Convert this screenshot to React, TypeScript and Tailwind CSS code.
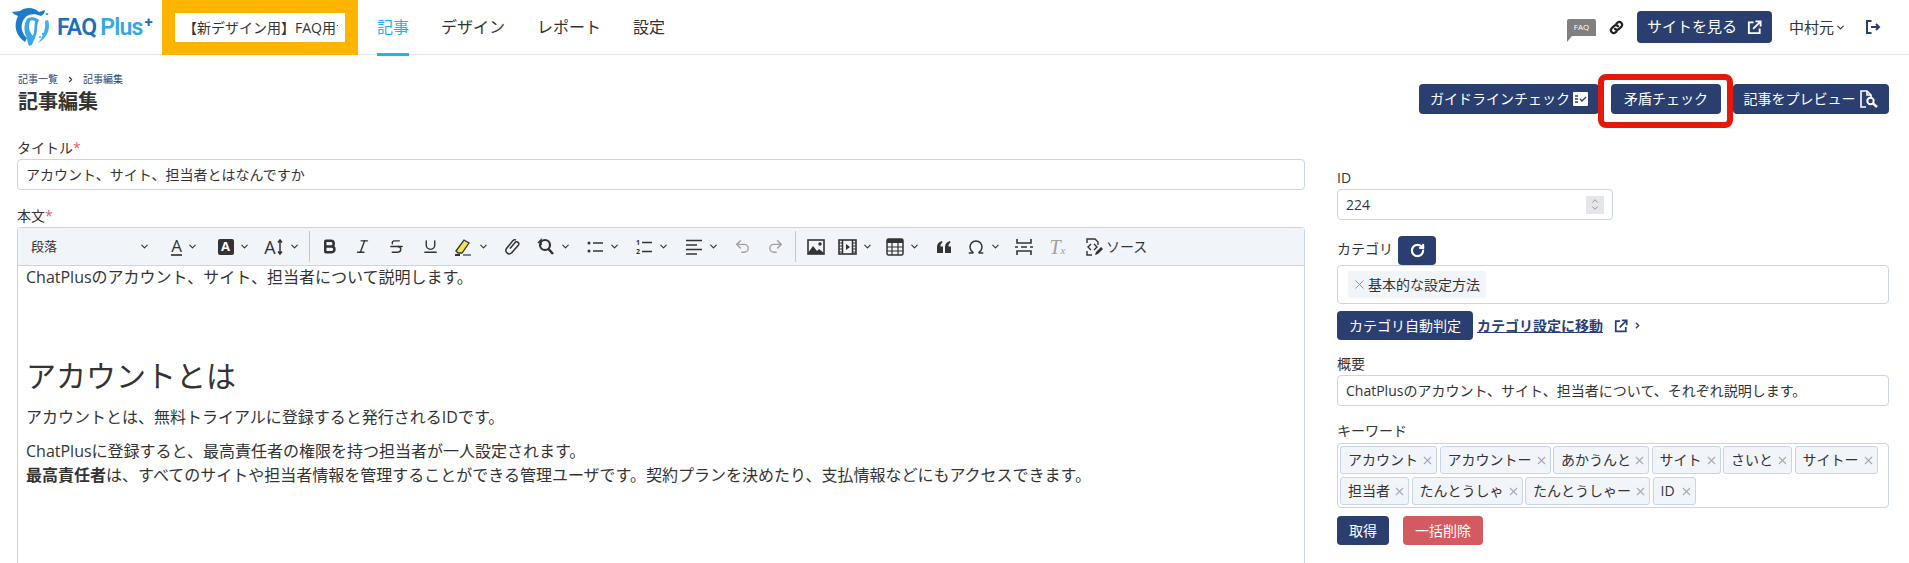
import type { ReactNode } from "react";
import { Bold, ChevronDown, ChevronRight, Italic, Strikethrough, Underline, Undo2, Redo2, RotateCw, X, ChevronUp, Omega } from "lucide-react";

const font = "font-['Open_Sans','Noto_Sans_CJK_JP',sans-serif]";

const keywordRows = [
  [
    ["アカウント", "w-[97px]"],
    ["アカウントー", "w-[111px]"],
    ["あかうんと", "w-[96px]"],
    ["サイト", "w-[69px]"],
    ["さいと", "w-[69px]"],
    ["サイトー", "w-[83px]"],
  ],
  [
    ["担当者", "w-[69px]"],
    ["たんとうしゃ", "w-[111px]"],
    ["たんとうしゃー", "w-[125px]"],
    ["ID", "w-[43px]"],
  ],
];

function OpenIcon({ size = 15 }: { size?: number }) {
  return (
    <svg width={size} height={size} viewBox="0 0 16 16" fill="none" stroke="currentColor" strokeWidth="2">
      <path d="M7 2.5H2v11.5h11.5V9" />
      <path d="M6.5 9.5 14 2M9 1.5h5.5V7" />
    </svg>
  );
}

function ChainIcon() {
  return (
    <svg width="15" height="15" viewBox="0 0 16 16" fill="none" stroke="#222" strokeWidth="2.4" strokeLinecap="round">
      <path d="M6.5 9.5a3 3 0 0 0 4.2 0l2.6-2.6a3 3 0 0 0-4.2-4.2L8 3.8" />
      <path d="M9.5 6.5a3 3 0 0 0-4.2 0L2.7 9.1a3 3 0 0 0 4.2 4.2L8 12.2" />
    </svg>
  );
}

function LogoutIcon() {
  return (
    <svg width="16" height="16" viewBox="0 0 16 16" fill="none" stroke="#2a3f70" strokeWidth="2">
      <path d="M6.5 2H2v12h4.5" />
      <path d="M6 8h8M11 5l3 3-3 3" />
    </svg>
  );
}

function ToolIcon({ children, w = 18 }: { children: ReactNode; w?: number }) {
  return (
    <svg width={w} height="18" viewBox={`0 0 ${w} 18`} fill="none" stroke="currentColor" strokeWidth="1.5">
      {children}
    </svg>
  );
}

function NavyButton({ children, className = "" }: { children: ReactNode; className?: string }) {
  return (
    <button className={`flex items-center justify-center rounded bg-[#2a3f70] text-sm text-white ${className}`}>
      {children}
    </button>
  );
}

function Label({ children, required }: { children: ReactNode; required?: boolean }) {
  return (
    <label className="block text-sm leading-5 text-[#333]">
      {children}
      {required && <span className="text-[#e06060]">*</span>}
    </label>
  );
}

function Tool({ w, chevron, children, muted }: { w: string; chevron?: boolean; children: ReactNode; muted?: boolean }) {
  return (
    <div className={`flex shrink-0 items-center justify-center gap-[5px] ${w} ${muted ? "text-[#a0a0a0]" : "text-[#333]"}`}>
      {children}
      {chevron && <ChevronDown size={11} strokeWidth={2.4} />}
    </div>
  );
}

function Sep() {
  return <div className="mx-[3px] h-[31px] w-px shrink-0 bg-[#c4c8cc]" />;
}

function Logo() {
  return (
    <div className="flex items-center">
      <svg width="40" height="40" viewBox="0 0 40 40" className="ml-[12px]">
        <path d="M36 13 C39 22 35 31 26 36 C31 30 34 22 33 14Z" fill="#39b3e8" />
        <path d="M0 5 L8 4 C13 0 22 0 27 5 L33 3 C33 6 31 8 29 9 C22 6 15 7 12 12 C8 18 9 26 15 31 L13 35 C4 29 1 19 6 9 C4 8 1 7 0 5Z" fill="#1c7cc9" />
        <path d="M16 11 C21 9 25 11 27 13 C24 18 26 23 24 28 C23 32 21 34 20 38 L17 39 C16 36 15 34 15 31 C11 24 12 15 16 11Z" fill="#3aa5e8" />
        <path d="M18 14 C16 20 17 25 21 29 C23 24 22 19 23 14 C21 13 19 13 18 14Z" fill="#ffffff" />
        <circle cx="35" cy="7" r="1.3" fill="#39b3e8" />
        <circle cx="31" cy="27" r="1.2" fill="#39b3e8" />
        <circle cx="28" cy="30" r="1" fill="#39b3e8" />
      </svg>
      <div className="ml-[5px] flex items-start font-['Roboto',sans-serif] text-[23px] leading-none font-semibold tracking-[-0.8px]">
        <span className="text-[#1c6fb8]">FAQ</span>
        <span className="ml-[4px] text-[#35a7e6]">Plus</span>
        <span className="ml-[2px] text-[15px] leading-[12px] font-bold text-[#1c6fb8]">+</span>
      </div>
    </div>
  );
}

function Header() {
  return (
    <header className="flex h-[55px] items-stretch border-b border-[#e3e9ee]">
      <div className="flex w-[162px] items-center">
        <Logo />
      </div>
      <div className="flex h-[55px] w-[196px] items-center justify-center bg-[#ffb400]">
        <div className="flex h-[29px] w-[170px] items-center bg-white pl-[8px] text-sm whitespace-nowrap text-[#333]">
          <span className="block w-[155px] overflow-hidden">【新デザイン用】FAQ用サ</span>
        </div>
      </div>
      <nav className="ml-[19px] flex text-[16px] text-[#333]">
        <a className="flex h-[56px] w-[32px] items-center justify-center border-b-[3px] border-[#18b9e6] text-[#18b9e6]">記事</a>
        <a className="ml-[32px] flex items-center">デザイン</a>
        <a className="ml-[32px] flex items-center">レポート</a>
        <a className="ml-[32px] flex items-center">設定</a>
      </nav>
      <div className="ml-auto flex items-center">
        <div className="relative flex h-[17px] w-[29px] items-center justify-center rounded-t-[2px] bg-[#808080] text-[8px] text-white">
          FAQ
          <div className="absolute top-[17px] left-0 h-0 w-0 border-t-[6px] border-r-[5px] border-t-[#808080] border-r-transparent" />
        </div>
        <span className="ml-[13px]"><ChainIcon /></span>
        <NavyButton className="ml-[13px] h-[32px] w-[135px] gap-[10px] text-[15px]">
          サイトを見る
          <OpenIcon />
        </NavyButton>
        <span className="ml-[17px] text-[15px] text-[#333]">中村元</span>
        <ChevronDown size={11} strokeWidth={2.5} className="ml-[1px] text-[#333]" />
        <span className="mr-[28px] ml-[19px]"><LogoutIcon /></span>
      </div>
    </header>
  );
}

function TitleRow() {
  return (
    <div className="relative flex h-[83px] justify-between pr-[20px] pl-[18px]">
      <div>
        <div className="mt-[17px] flex items-center text-[10px] leading-[14px] text-[#2a3f70]">
          記事一覧
          <ChevronRight size={9} strokeWidth={3} className="mx-[8px]" />
          記事編集
        </div>
        <h1 className="mt-[2px] text-xl leading-7 font-bold text-[#333]">記事編集</h1>
      </div>
      <div className="mt-[29px] flex h-[30px] gap-[12px]">
        <NavyButton className="w-[180px] gap-[3px]">
          ガイドラインチェック
          <svg width="15" height="14" viewBox="0 0 15 14">
            <rect width="15" height="14" rx="1" fill="#fff" />
            <path d="M2 4h3M2 7h3M2 10h3" stroke="#2a3f70" strokeWidth="1.4" />
            <path d="M7 7l2 2 4-4" stroke="#2a3f70" strokeWidth="1.4" fill="none" />
          </svg>
        </NavyButton>
        <NavyButton className="relative w-[110px]">
          矛盾チェック
          <span className="absolute top-[-10px] left-[-13px] h-[54px] w-[135px] rounded-[8px] border-[6px] border-[#e8170c]" />
        </NavyButton>
        <NavyButton className="w-[156px] gap-[3px]">
          記事をプレビュー
          <svg width="20" height="18" viewBox="0 0 20 18" fill="none" stroke="#fff" strokeWidth="1.6">
            <path d="M7 17H2V1h6l4 4v2" />
            <path d="M8 1v4h4" />
            <circle cx="11.5" cy="11" r="3.2" strokeWidth="2" />
            <path d="M14 13.5 18 17" strokeWidth="2.4" />
          </svg>
        </NavyButton>
      </div>
    </div>
  );
}

function Toolbar() {
  return (
    <div className="flex h-[38px] items-center border-b border-[#c8d4e8] bg-[#f1f4f9]">
      <div className="flex w-[142px] shrink-0 items-center justify-between pr-[10px] pl-[13px] text-[13px] text-[#333]">
        段落
        <ChevronDown size={11} strokeWidth={2.4} />
      </div>
      <Tool w="w-[49px]" chevron>
        <span className="border-b-2 border-[#555] text-[17px] leading-[17px]">A</span>
      </Tool>
      <Tool w="w-[49px]" chevron>
        <span className="flex h-[16px] w-[16px] items-center justify-center rounded-[2px] bg-[#333] text-[13px] font-bold text-white">A</span>
      </Tool>
      <Tool w="w-[48px]" chevron>
        <span className="flex items-center text-[18px] leading-none">
          A
          <ToolIcon w={8}><path d="M4 2v14M2 4.5 4 2l2 2.5M2 13.5 4 16l2-2.5" /></ToolIcon>
        </span>
      </Tool>
      <Sep />
      <Tool w="w-[33px]"><Bold size={17} strokeWidth={3.5} /></Tool>
      <Tool w="w-[33px]"><Italic size={17} /></Tool>
      <Tool w="w-[34px]"><Strikethrough size={17} /></Tool>
      <Tool w="w-[34px]"><Underline size={17} /></Tool>
      <Tool w="w-[49px]" chevron>
        <ToolIcon w={19}>
          <path d="M2 13 10 2l5 3-7 10H4z" fill="#f3e35a" stroke="#333" strokeWidth="1.3" />
          <path d="M1 17h5" stroke="#333" strokeWidth="2" />
          <path d="M9 17h8" stroke="#333" strokeWidth="1.2" />
        </ToolIcon>
      </Tool>
      <Tool w="w-[34px]">
        <ToolIcon>
          <path d="M7 11.5 12.5 5a2.2 2.2 0 0 1 3 3l-7 8a3.4 3.4 0 0 1-5-4.5L10 3.5a2.5 2.5 0 0 1 3-.5" transform="translate(-1 -1)" />
        </ToolIcon>
      </Tool>
      <Tool w="w-[48px]" chevron>
        <ToolIcon>
          <circle cx="8" cy="7" r="5" strokeWidth="2.2" />
          <path d="M11.5 11 16 16" strokeWidth="2.6" />
          <path d="M1 5 4 2v5" strokeWidth="1.6" />
        </ToolIcon>
      </Tool>
      <Tool w="w-[49px]" chevron>
        <ToolIcon>
          <circle cx="3" cy="5" r="1.5" fill="currentColor" stroke="none" />
          <circle cx="3" cy="13" r="1.5" fill="currentColor" stroke="none" />
          <path d="M7 5h10M7 13h10" strokeWidth="1.7" />
        </ToolIcon>
      </Tool>
      <Tool w="w-[50px]" chevron>
        <ToolIcon>
          <text x="1" y="7" fontSize="7" fontWeight="700" fill="currentColor" stroke="none">1</text>
          <text x="1" y="16" fontSize="7" fontWeight="700" fill="currentColor" stroke="none">2</text>
          <path d="M7 4.5h10M7 13.5h10" strokeWidth="1.7" />
        </ToolIcon>
      </Tool>
      <Tool w="w-[49px]" chevron>
        <ToolIcon>
          <path d="M1 2.5h16M1 7h11M1 11.5h16M1 16h11" strokeWidth="1.6" />
        </ToolIcon>
      </Tool>
      <Tool w="w-[33px]" muted><Undo2 size={17} /></Tool>
      <Tool w="w-[33px]" muted><Redo2 size={17} /></Tool>
      <Sep />
      <Tool w="w-[33px]">
        <ToolIcon>
          <rect x="1" y="2" width="16" height="14" strokeWidth="1.6" />
          <circle cx="13" cy="6" r="1.7" fill="currentColor" stroke="none" />
          <path d="M1 15 6 8l4 5 2-2 5 4v1H1z" fill="currentColor" stroke="none" />
        </ToolIcon>
      </Tool>
      <Tool w="w-[47px]" chevron>
        <ToolIcon w={19}>
          <rect x="1" y="2" width="17" height="14" strokeWidth="1.6" />
          <path d="M4.5 2v14M14.5 2v14" />
          <path d="M1 5h3.5M1 8h3.5M1 11h3.5M1 14h3.5M14.5 5H18M14.5 8H18M14.5 11H18M14.5 14H18" strokeWidth="1" />
          <path d="M8 6v6l4-3z" fill="currentColor" stroke="none" />
        </ToolIcon>
      </Tool>
      <Tool w="w-[48px]" chevron>
        <ToolIcon>
          <rect x="1" y="1" width="16" height="16" rx="1.5" />
          <rect x="1" y="1" width="16" height="4" fill="currentColor" stroke="none" />
          <path d="M1 9h16M1 13h16M6 5v12M12 5v12" strokeWidth="1.2" />
        </ToolIcon>
      </Tool>
      <Tool w="w-[33px]">
        <ToolIcon>
          <path d="M2 15V9c0-3 1.5-5 5-6l.5 1.5C6 5.5 5.5 6.5 5.5 8.5H8V15zM10 15V9c0-3 1.5-5 5-6l.5 1.5C14 5.5 13.5 6.5 13.5 8.5H16V15z" fill="currentColor" stroke="none" />
        </ToolIcon>
      </Tool>
      <Tool w="w-[47px]" chevron><Omega size={18} /></Tool>
      <Tool w="w-[33px]">
        <ToolIcon w={20}>
          <path d="M3 1v4h14V1M3 17v-4h14v4" strokeWidth="1.6" />
          <path d="M1 9h3M7 9h6M16 9h3" strokeWidth="1.6" />
        </ToolIcon>
      </Tool>
      <Tool w="w-[35px]" muted>
        <span className="font-['Liberation_Serif',serif] text-[20px] leading-none italic">T<span className="text-[11px]">x</span></span>
      </Tool>
      <div className="ml-[9px] flex items-center gap-[2px] text-sm text-[#333]">
        <ToolIcon w={20}>
          <path d="M3 5V1h8l3 3v3M3 13v4h5" strokeWidth="1.4" />
          <path d="M7 6 4 9l3 3M10 6l3 3-3 3" strokeWidth="1.4" />
          <path d="M11 17l1-3 5-5 2 2-5 5z" fill="currentColor" stroke="none" />
        </ToolIcon>
        ソース
      </div>
    </div>
  );
}

function Editor() {
  return (
    <div className="mt-[1px] rounded-t border border-b-0 border-[#c8d4e8]">
      <Toolbar />
      <div className="h-[400px] px-[8px] pt-[1px] text-[#333]">
        <p className="text-[16px] leading-[20px]">ChatPlusのアカウント、サイト、担当者について説明します。</p>
        <h2 className="mt-[68px] text-[30px] leading-[42px]">アカウントとは</h2>
        <p className="mt-[8px] text-[16px] leading-[24px]">アカウントとは、無料トライアルに登録すると発行されるIDです。</p>
        <p className="mt-[10px] text-[16px] leading-[24px]">
          ChatPlusに登録すると、最高責任者の権限を持つ担当者が一人設定されます。
          <br />
          <b>最高責任者</b>は、すべてのサイトや担当者情報を管理することができる管理ユーザです。契約プランを決めたり、支払情報などにもアクセスできます。
        </p>
      </div>
    </div>
  );
}

function Chip({ label, w }: { label: string; w: string }) {
  return (
    <span className={`flex h-[28px] items-center justify-between rounded-[3px] border border-[#c8d4e8] bg-[#f1f4f9] pr-[2px] pl-[7px] text-sm text-[#333] ${w}`}>
      {label}
      <X size={13} strokeWidth={2} className="text-[#a5a9b8]" />
    </span>
  );
}

function Field({ value }: { value: string }) {
  return (
    <div className="flex h-[31px] items-center rounded border border-[#c8d4e8] px-[8px] text-sm text-[#333]">
      {value}
    </div>
  );
}

function Side() {
  return (
    <div className="ml-[32px] w-[552px] pt-[30px]">
      <Label>ID</Label>
      <div className="mt-[1px] flex h-[31px] w-[276px] items-center justify-between rounded border border-[#c8d4e8] pr-[8px] pl-[8px] text-sm text-[#333]">
        224
        <span className="flex h-[18px] w-[18px] flex-col items-center justify-center bg-[#e6e6ea] text-[#888]">
          <ChevronUp size={10} />
          <ChevronDown size={10} className="-mt-[3px]" />
        </span>
      </div>
      <div className="mt-[16px] flex items-center gap-[5px]">
        <span className="-mt-[4px]"><Label>カテゴリ</Label></span>
        <NavyButton className="h-[29px] w-[38px]"><RotateCw size={15} strokeWidth={3.5} /></NavyButton>
      </div>
      <div className="flex h-[39px] items-center rounded border border-[#c8d4e8] px-[10px]">
        <span className="flex h-[27px] w-[138px] items-center rounded-[3px] bg-[#f1f4f9] pl-[4px] text-sm text-[#333]">
          <X size={15} strokeWidth={1.6} className="mr-[1px] text-[#8a93a8]" />
          基本的な設定方法
        </span>
      </div>
      <div className="mt-[7px] flex items-center">
        <NavyButton className="h-[29px] w-[136px]">カテゴリ自動判定</NavyButton>
        <a className="ml-[4px] text-sm font-bold text-[#2a3f70] underline">カテゴリ設定に移動</a>
        <span className="ml-[11px] text-[#2a3f70]"><OpenIcon size={14} /></span>
        <ChevronRight size={9} strokeWidth={4} className="ml-[5px] text-[#2a3f70]" />
      </div>
      <div className="mt-[16px]"><span className="-mt-[2px] block"><Label>概要</Label></span></div>
      <div className="mt-[1px]"><Field value="ChatPlusのアカウント、サイト、担当者について、それぞれ説明します。" /></div>
      <div className="mt-[15px]"><Label>キーワード</Label></div>
      <div className="mt-[2px] flex h-[65px] flex-col gap-[3px] rounded border border-[#c8d4e8] px-[2px] pt-[2px]">
        {keywordRows.map((row, i) => (
          <div key={i} className="flex gap-[2.5px]">
            {row.map(([label, w]) => (
              <Chip key={label} label={label} w={w} />
            ))}
          </div>
        ))}
      </div>
      <div className="mt-[8px] flex gap-[14px]">
        <NavyButton className="h-[29px] w-[52px]">取得</NavyButton>
        <button className="h-[29px] w-[80px] rounded bg-[#d35a60] text-sm text-white">一括削除</button>
      </div>
    </div>
  );
}

export default function App() {
  return (
    <div className={`h-[563px] w-[1909px] overflow-hidden bg-white ${font}`}>
      <Header />
      <TitleRow />
      <div className="flex pl-[17px]">
        <div className="w-[1288px] shrink-0">
          <Label required>タイトル</Label>
          <div className="mt-[1px]"><Field value="アカウント、サイト、担当者とはなんですか" /></div>
          <div className="mt-[16px]"><Label required>本文</Label></div>
          <Editor />
        </div>
        <Side />
      </div>
    </div>
  );
}
